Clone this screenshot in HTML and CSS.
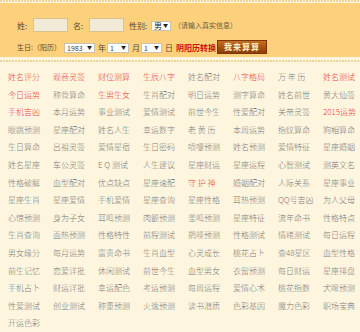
FILE: index.html
```html
<!DOCTYPE html>
<html>
<head>
<meta charset="utf-8">
<title>在线算命</title>
<link rel="stylesheet" href="styles.css">
</head>
<body>
<div class="dots"></div>
<div class="calc">
	<div class="line">
		<span class="lab">姓:</span><input class="txt" type="text">
		<span class="lab lab2">名:</span><input class="txt" type="text">
		<span class="lab lab3">性别:</span>
		<span class="sel sel-sex"><select><option>男</option><option>女</option></select></span>
		<span class="tip">（请输入真实信息）</span>
	</div>
	<div class="line line2">
		<span class="lab">生日:（阳历）</span>
		<span class="sel sel-year"><select><option>1983</option></select></span>
		<span class="unit">年</span>
		<span class="sel sel-mon"><select><option>1</option></select></span>
		<span class="unit">月</span>
		<span class="sel sel-day"><select><option>1</option></select></span>
		<span class="unit">日</span>
		<a class="convert">阴阳历转换</a>
		<a class="btn">我来算算</a>
	</div>
</div>
<div class="dots"></div>
<div class="list">
	<a class="hot">姓名评分</a><a class="hot">观音灵签</a><a class="hot">财位测算</a><a class="hot">生辰八字</a><a>姓名配对</a><a class="hot">八字格局</a><a>万 年 历</a><a class="hot">姓名测试</a>
	<a class="hot">今日运势</a><a>称骨算命</a><a class="hot">生男生女</a><a>生肖配对</a><a>明日运势</a><a>测字算命</a><a>姓名前世</a><a>黄大仙签</a>
	<a class="hot">手机吉凶</a><a>本月运势</a><a>事业测试</a><a>爱情测试</a><a>前世今生</a><a>性爱配对</a><a>关帝灵签</a><a class="hot">2015运势</a>
	<a>眼跳预测</a><a>星座配对</a><a>姓名人生</a><a>幸运数字</a><a>老 黄 历</a><a>本周运势</a><a>指纹算命</a><a>狗相算命</a>
	<a>生日算命</a><a>吕祖灵签</a><a>爱情星宿</a><a>生日密码</a><a>喷嚏预测</a><a>姓名预测</a><a>爱情特征</a><a>星座婚姻</a>
	<a>姓名星座</a><a>车公灵签</a><a>E Q 测试</a><a>人生建议</a><a>星座财运</a><a>星座运程</a><a>心智测试</a><a>测英文名</a>
	<a>性格破解</a><a>血型配对</a><a>优点缺点</a><a>星座速配</a><a class="hot">守 护 神</a><a>婚姻配对</a><a>人际关系</a><a>星座事业</a>
	<a>星座生肖</a><a>星座爱情</a><a>手机爱情</a><a>星座查询</a><a>星座性格</a><a>耳热预测</a><a>QQ号吉凶</a><a>为人父母</a>
	<a>心惊预测</a><a>身为子女</a><a>耳鸣预测</a><a>肉颤预测</a><a>釜鸣预测</a><a>星座特征</a><a>流年命书</a><a>性格特点</a>
	<a>生肖查询</a><a>面热预测</a><a>性格特性</a><a>前程测试</a><a>鹊噪预测</a><a>性格测试</a><a>情绪测试</a><a>每日运程</a>
	<a>男女缘分</a><a>每月运势</a><a>富贵命书</a><a>生肖血型</a><a>心灵成长</a><a>桃花占卜</a><a>查48星区</a><a>血型性格</a>
	<a>前生记忆</a><a>恋爱详批</a><a>休闲测试</a><a>前世今生</a><a>血型男女</a><a>衣留预测</a><a>每日财运</a><a>星座排盘</a>
	<a>手机占卜</a><a>财运详批</a><a>幸运配色</a><a>考运预测</a><a>每周运程</a><a>爱情心术</a><a>桃花指数</a><a>犬嗥预测</a>
	<a>性爱测试</a><a>创业测试</a><a>称重预测</a><a>火逸预测</a><a>读书潜质</a><a>色彩基因</a><a>魔力色彩</a><a>职场宝典</a>
	<a>开运色彩</a>
</div>
</body>
</html>
```

FILE: styles.css
```css
body{
	margin:0;
	background-color:#fdf5de;
	font-family:"Noto Sans CJK SC","Liberation Sans",sans-serif;
	font-size:8px;
	color:#555;
}
.dots{
	height:2px;
	margin:0 0 1px 0;
	background-image:linear-gradient(to right,#f0d398 2px,transparent 2px);
	background-size:3px 2px;
}
.calc{
	background-color:#fdd17b;
	height:42px;
	padding:12px 0 0 17px;
	margin-bottom:3px;
}
.calc .line{
	display:flex;
	align-items:center;
	height:20px;
}
.calc .line2{
	margin-top:4px;
	height:16px;
}
.calc .lab{
	color:#5a4a30;
	width:16px;
	white-space:nowrap;
}
.calc .lab2{
	margin-left:5px;
}
.calc .lab3{
	margin-left:5px;
	width:22px;
}
.calc .line2 .lab{
	width:47px;
	font-size:7px;
}
.calc .txt{
	box-sizing:border-box;
	width:35px;
	height:14px;
	margin:0;
	padding:0;
	border:1px solid #d9c393;
	background-color:#f1ead6;
}
.sel{
	position:relative;
	display:inline-block;
	height:10px;
}
.sel select{
	-webkit-appearance:none;
	appearance:none;
	box-sizing:border-box;
	width:100%;
	height:10px;
	margin:0;
	padding:0 0 0 2px;
	border:1px solid #c9c2b2;
	background-color:#fff;
	font-family:"Noto Sans CJK SC","Liberation Sans",sans-serif;
	font-size:7px;
	line-height:8px;
	color:#444;
}
.sel:after{
	content:"▼";
	position:absolute;
	right:3px;
	top:2px;
	font-size:5px;
	line-height:6px;
	color:#222;
}
.sel-sex{
	width:20px;
}
.sel-sex select{
	font-size:8px;
	color:#222;
}
.sel-year{
	width:31px;
}
.sel-mon{
	width:22px;
}
.sel-day{
	width:21px;
}
.tip{
	margin-left:3px;
	font-size:7px;
	color:#6b5c44;
	white-space:nowrap;
}
.unit{
	margin:0 1px 0 3px;
	color:#5a4a30;
}
.convert{
	margin-left:2px;
	color:#c8110d;
	font-weight:bold;
	white-space:nowrap;
}
.btn{
	box-sizing:border-box;
	width:50px;
	height:14px;
	margin-left:1px;
	border:1px solid #7d3505;
	background:linear-gradient(#c86e1c,#8c3c06);
	color:#fff1c8;
	font-weight:bold;
	font-size:8px;
	line-height:12px;
	letter-spacing:1px;
	text-align:center;
}
.list{
	display:grid;
	grid-template-columns:repeat(8,45px);
	grid-auto-rows:17.6px;
	padding:5px 0 0 8px;
}
.list a{
	line-height:17.6px;
	color:#7a7a7a;
	font-weight:300;
	white-space:nowrap;
}
.list a.hot{
	color:#e8413f;
}
```
